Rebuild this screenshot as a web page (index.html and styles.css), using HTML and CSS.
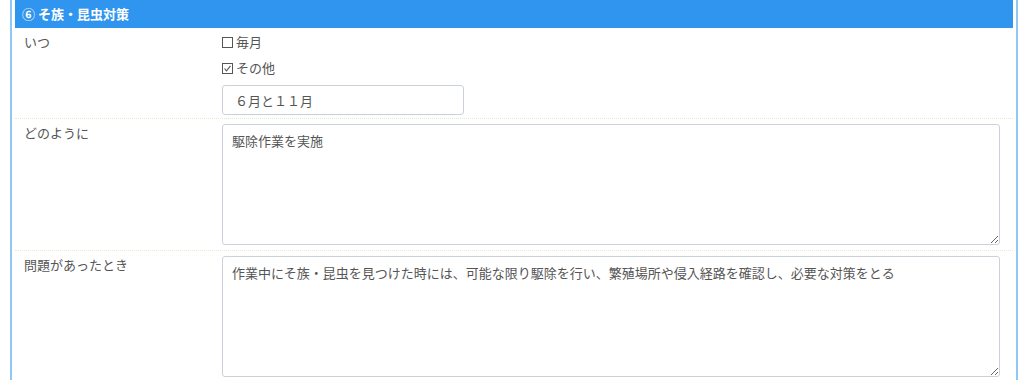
FILE: index.html
```html
<!DOCTYPE html>
<html lang="ja">
<head>
    <meta charset="UTF-8">
    <meta name="viewport" content="width=device-width, initial-scale=1.0">
    <title>そ族・昆虫対策</title>
    <link rel="stylesheet" href="styles.css">
</head>
<body>
    <div class="panel">
        <div class="panel-head">⑥ そ族・昆虫対策</div>

        <div class="row row-when">
            <div class="label">いつ</div>
            <div class="value">
                <div class="check">
                    <svg class="box" width="11" height="11" viewBox="0 0 11 11">
                        <rect x="0.5" y="0.5" width="10" height="10" fill="none" stroke="#555" stroke-width="1"/>
                    </svg>毎月
                </div>
                <div class="check">
                    <svg class="box" width="11" height="11" viewBox="0 0 11 11">
                        <rect x="0.5" y="0.5" width="10" height="10" fill="none" stroke="#555" stroke-width="1"/>
                        <path d="M2.5 5.5 L4.5 7.8 L8.5 2.8" fill="none" stroke="#555" stroke-width="1.1"/>
                    </svg>その他
                </div>
                <input class="field" type="text" value="６月と１１月" readonly>
            </div>
        </div>

        <div class="row">
            <div class="label">どのように</div>
            <div class="value">
                <textarea class="memo" readonly>駆除作業を実施</textarea>
            </div>
        </div>

        <div class="row">
            <div class="label">問題があったとき</div>
            <div class="value">
                <textarea class="memo" readonly>作業中にそ族・昆虫を見つけた時には、可能な限り駆除を行い、繁殖場所や侵入経路を確認し、必要な対策をとる</textarea>
            </div>
        </div>
    </div>
</body>
</html>
```

FILE: styles.css
```css
body {
    margin: 0;
    padding: 0;
    background: #ffffff;
    font-family: "Noto Sans CJK JP", "Noto Sans", sans-serif;
    font-size: 13px;
    color: #555;
}

.panel {
    margin-left: 10px;
    width: 998px;
    padding: 0 3px;
    border-left: 2px solid #8fc7f6;
    border-right: 2px solid #8fc7f6;
    min-height: 380px;
}

.panel-head {
    height: 28px;
    line-height: 28px;
    padding-left: 7px;
    background-color: #2f95ee;
    color: white;
    font-weight: bold;
}

.row {
    display: grid;
    grid-template-columns: 207px 1fr;
    padding: 1px 0 5px;
    border-bottom: 1px dotted #ebe7d3;
}

.row-when {
    padding-bottom: 3px;
}

.label {
    padding-left: 9px;
    height: 26px;
    line-height: 26px;
}

.value {
    padding-right: 8px;
}

.check {
    display: flex;
    align-items: center;
    height: 26px;
    line-height: 26px;
}

.check .box {
    margin-right: 3px;
}

.field {
    display: block;
    box-sizing: border-box;
    width: 242px;
    height: 30px;
    margin-top: 4px;
    padding: 0 12px;
    border: 1px solid #ccd2da;
    border-radius: 3px;
    font-family: inherit;
    font-size: 13px;
    color: #555;
    outline: none;
}

.memo {
    display: block;
    box-sizing: border-box;
    width: 778px;
    height: 121px;
    margin-top: 4px;
    padding: 6px 9px;
    border: 1px solid #ccd2da;
    border-radius: 3px;
    font-family: inherit;
    font-size: 13px;
    line-height: 20px;
    color: #555;
    outline: none;
}
```
